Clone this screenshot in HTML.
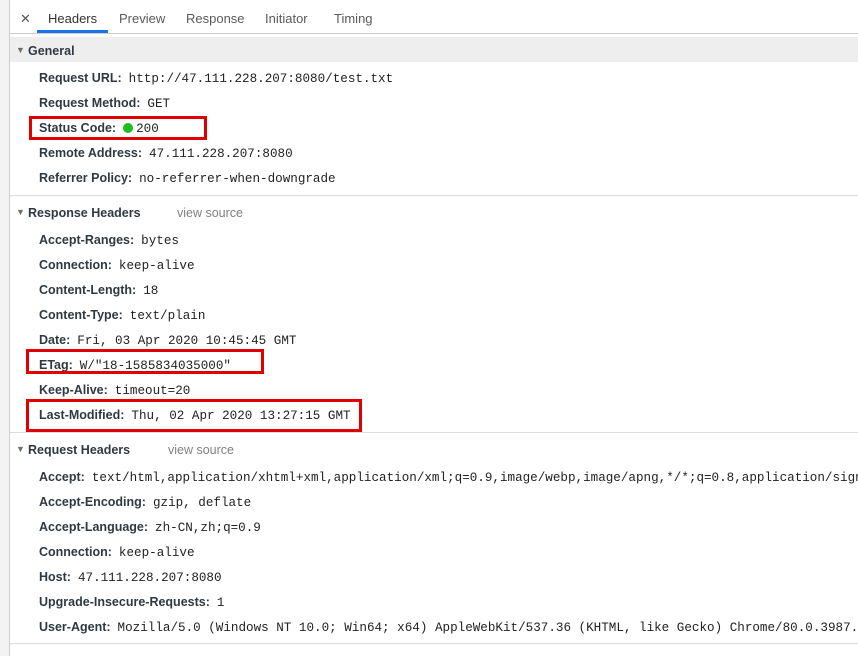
<!DOCTYPE html>
<html><head><meta charset="utf-8"><style>
html,body{margin:0;width:858px;height:656px;overflow:hidden}
body{background:#fff;position:relative;font-family:"Liberation Sans",sans-serif;font-size:12px;color:#303942}
.wrap{position:absolute;left:0;top:0;width:858px;height:656px;overflow:hidden}
.ls{position:absolute;left:0;top:0;width:9px;height:656px;background:#f3f3f3;border-right:1px solid #ccc}
.tabs{position:absolute;left:10px;top:0;right:0;height:33px;background:#fff;border-bottom:1px solid #ccc}
.tab{position:absolute;top:11px;font-size:13px;color:#5a5a5a}
.ul{position:absolute;left:37px;top:30px;width:71px;height:3px;background:#1a73e8}
.sec{position:absolute;left:10px;right:0;height:25px;font-weight:bold;color:#303942}
.sec .t{position:absolute;left:18px;top:7px;font-size:12.5px}
.sec .a{position:absolute;left:6px;top:8px;font-size:9px;color:#6e6e6e}
.sec .v{position:absolute;top:7px;font-weight:normal;color:#808080;font-size:12.5px}
.r{position:absolute;left:39px;white-space:nowrap;font-size:12.5px}
.r b{color:#303942;margin-right:7px}
.r span{font-family:"Liberation Mono",monospace;font-size:12.6px;color:#222}
.sep{position:absolute;left:10px;right:0;height:1px;background:#ddd}
.box{position:absolute;border:3px solid #e00000;box-sizing:border-box}
</style></head><body><div class="wrap">
<div class="ls"></div>
<div class="tabs"></div>
<div class="tab" style="left:20px;color:#555">✕</div>
<div class="tab" style="left:48px;color:#333">Headers</div>
<div class="tab" style="left:119px">Preview</div>
<div class="tab" style="left:186px">Response</div>
<div class="tab" style="left:265px">Initiator</div>
<div class="tab" style="left:334px">Timing</div>
<div class="ul"></div>

<div class="sec" style="top:37px;background:#eeeeee"><span class="a">▼</span><span class="t">General</span></div>
<div class="r" style="top:71px"><b>Request URL:</b><span>http://47.111.228.207:8080/test.txt</span></div>
<div class="r" style="top:96px"><b>Request Method:</b><span>GET</span></div>
<div class="r" style="top:121px"><b>Status Code:</b><span style="display:inline-block;width:10px;height:10px;border-radius:50%;background:#1cc01c;vertical-align:-1px;margin-right:3px"></span><span>200</span></div>
<div class="r" style="top:146px"><b>Remote Address:</b><span>47.111.228.207:8080</span></div>
<div class="r" style="top:171px"><b>Referrer Policy:</b><span>no-referrer-when-downgrade</span></div>
<div class="sep" style="top:195px"></div>

<div class="sec" style="top:199px"><span class="a">▼</span><span class="t">Response Headers</span><span class="v" style="left:167px">view source</span></div>
<div class="r" style="top:233px"><b>Accept-Ranges:</b><span>bytes</span></div>
<div class="r" style="top:258px"><b>Connection:</b><span>keep-alive</span></div>
<div class="r" style="top:283px"><b>Content-Length:</b><span>18</span></div>
<div class="r" style="top:308px"><b>Content-Type:</b><span>text/plain</span></div>
<div class="r" style="top:333px"><b>Date:</b><span>Fri, 03 Apr 2020 10:45:45 GMT</span></div>
<div class="r" style="top:358px"><b>ETag:</b><span>W/"18-1585834035000"</span></div>
<div class="r" style="top:383px"><b>Keep-Alive:</b><span>timeout=20</span></div>
<div class="r" style="top:408px"><b>Last-Modified:</b><span>Thu, 02 Apr 2020 13:27:15 GMT</span></div>
<div class="sep" style="top:432px"></div>

<div class="sec" style="top:436px"><span class="a">▼</span><span class="t">Request Headers</span><span class="v" style="left:158px">view source</span></div>
<div class="r" style="top:470px"><b>Accept:</b><span>text/html,application/xhtml+xml,application/xml;q=0.9,image/webp,image/apng,*/*;q=0.8,application/signed-exchange</span></div>
<div class="r" style="top:495px"><b>Accept-Encoding:</b><span>gzip, deflate</span></div>
<div class="r" style="top:520px"><b>Accept-Language:</b><span>zh-CN,zh;q=0.9</span></div>
<div class="r" style="top:545px"><b>Connection:</b><span>keep-alive</span></div>
<div class="r" style="top:570px"><b>Host:</b><span>47.111.228.207:8080</span></div>
<div class="r" style="top:595px"><b>Upgrade-Insecure-Requests:</b><span>1</span></div>
<div class="r" style="top:620px"><b>User-Agent:</b><span>Mozilla/5.0 (Windows NT 10.0; Win64; x64) AppleWebKit/537.36 (KHTML, like Gecko) Chrome/80.0.3987.163</span></div>
<div class="sep" style="top:643px"></div>

<div class="box" style="left:29px;top:116px;width:178px;height:24px"></div>
<div class="box" style="left:26px;top:349px;width:238px;height:25px"></div>
<div class="box" style="left:26px;top:399px;width:336px;height:33px"></div>
</div></body></html>
